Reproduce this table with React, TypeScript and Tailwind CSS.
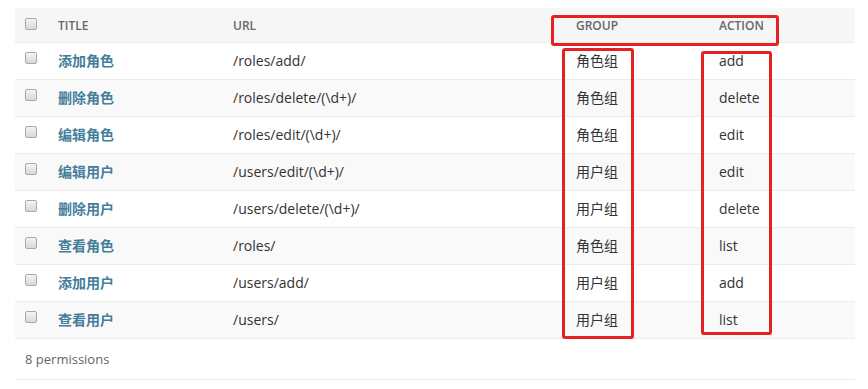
import React from "react";

const rows = [
  ["添加角色", "/roles/add/", "角色组", "add"],
  ["删除角色", "/roles/delete/(\\d+)/", "角色组", "delete"],
  ["编辑角色", "/roles/edit/(\\d+)/", "角色组", "edit"],
  ["编辑用户", "/users/edit/(\\d+)/", "用户组", "edit"],
  ["删除用户", "/users/delete/(\\d+)/", "用户组", "delete"],
  ["查看角色", "/roles/", "角色组", "list"],
  ["添加用户", "/users/add/", "用户组", "add"],
  ["查看用户", "/users/", "用户组", "list"],
];

function Checkbox() {
  return (
    <div className="ml-[10px] mb-[5px] h-[12px] w-[12px] rounded-[2px] border border-[#a9a9a9] bg-gradient-to-b from-[#f4f4f4] to-[#d8d8d8]" />
  );
}

export default function App() {
  return (
    <div
      className="relative h-[389px] w-[868px] bg-white pt-[8px] pl-[15px] pr-[13px]"
      style={{ fontFamily: '"Open Sans", "Noto Sans CJK SC", sans-serif' }}
    >
      <div className="grid h-[34px] grid-cols-[43px_175px_343px_143px_1fr] items-center bg-[#f6f6f6] pt-[2px] text-[12px] font-semibold uppercase text-[#666]">
        <Checkbox />
        <div>Title</div>
        <div>URL</div>
        <div>Group</div>
        <div>Action</div>
      </div>
      {rows.map((r, i) => (
        <div
          key={i}
          className={`grid h-[37px] grid-cols-[43px_175px_343px_143px_1fr] items-center border-t border-[#ececec] pb-[2px] text-[14px] text-[#333] ${
            i % 2 === 1 ? "bg-[#f9f9f9]" : "bg-white"
          }`}
        >
          <Checkbox />
          <div className="font-bold text-[#447e9b]">{r[0]}</div>
          <div>{r[1]}</div>
          <div>{r[2]}</div>
          <div>{r[3]}</div>
        </div>
      ))}
      <div className="flex h-[42px] items-center border-t border-b border-[#ececec] pl-[10px] pt-[2px] text-[13px] text-[#666]">
        8 permissions
      </div>

      <div className="absolute left-[551px] top-[15px] h-[31px] w-[228px] rounded-[3px] border-[3px] border-[#e52222]" />
      <div className="absolute left-[562px] top-[48px] h-[291px] w-[72px] rounded-[3px] border-[3px] border-[#e52222]" />
      <div className="absolute left-[701px] top-[51px] h-[284px] w-[71px] rounded-[3px] border-[3px] border-[#e52222]" />
    </div>
  );
}
